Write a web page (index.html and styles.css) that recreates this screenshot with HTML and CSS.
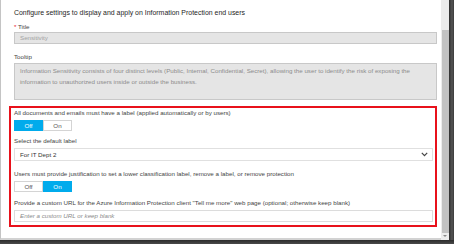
FILE: index.html
```html
<!DOCTYPE html>
<html lang="en">
<head>
    <meta charset="UTF-8">
    <title>Information Protection - Policy</title>
    <link rel="stylesheet" href="styles.css">
</head>
<body>
    <div class="window">
        <!-- Blade content -->
        <div class="blade">
            <div class="blade-title">Configure settings to display and apply on Information Protection end users</div>

            <div class="label label-first"><span class="required">*</span> Title</div>
            <div class="field field-disabled">Sensitivity</div>

            <div class="label label-gap">Tooltip</div>
            <div class="field field-disabled field-area">Information Sensitivity consists of four distinct levels (Public, Internal, Confidential, Secret), allowing the user to identify the risk of exposing the information to unauthorized users inside or outside the business.</div>

            <!-- Highlighted policy settings -->
            <div class="policy">
                <div class="label">All documents and emails must have a label (applied automatically or by users)</div>
                <div class="toggle">
                    <span class="toggle-opt selected">Off</span>
                    <span class="toggle-opt">On</span>
                </div>

                <div class="label label-mid">Select the default label</div>
                <div class="field field-select">
                    <span>For IT Dept 2</span>
                    <svg class="chevron" width="7" height="5" viewBox="0 0 7 5">
                        <path d="M0.8 0.8 L3.5 3.6 L6.2 0.8" fill="none" stroke="#444" stroke-width="1.2"/>
                    </svg>
                </div>

                <div class="label label-wide">Users must provide justification to set a lower classification label, remove a label, or remove protection</div>
                <div class="toggle">
                    <span class="toggle-opt">Off</span>
                    <span class="toggle-opt selected">On</span>
                </div>

                <div class="label label-url">Provide a custom URL for the Azure Information Protection client "Tell me more" web page (optional; otherwise keep blank)</div>
                <div class="field field-input">Enter a custom URL or keep blank</div>
            </div>
        </div>

        <!-- Scrollbar -->
        <div class="scrollbar">
            <div class="thumb"></div>
            <div class="arrow"></div>
        </div>
        <div class="frame-edge"></div>
    </div>
    <div class="frame-bottom"></div>
</body>
</html>
```

FILE: styles.css
```css
body {
    margin: 0;
    padding: 0;
    width: 454px;
    height: 244px;
    overflow: hidden;
    background-color: #3b3b3b;
    font-family: "Liberation Sans", Arial, sans-serif;
}

.window {
    display: flex;
    height: 240px;
}

/* Blade */
.blade {
    width: 441px;
    height: 240px;
    box-sizing: border-box;
    background-color: #ffffff;
    border-left: 1px solid #c4c4c4;
    border-bottom: 2px solid #d2d2d2;
    padding: 8px 4px 0 13px;
}

.blade-title {
    font-size: 6.95px;
    line-height: 10px;
    color: #1e1e1e;
    white-space: nowrap;
}

.label {
    font-size: 6.2px;
    line-height: 10px;
    color: #444444;
    white-space: nowrap;
}

.label-first {
    margin-top: 4px;
}

.label-gap {
    margin-top: 8px;
    margin-bottom: 1px;
}

.label-mid {
    margin-top: 5px;
    margin-bottom: 2px;
}

.label-wide {
    margin-top: 8px;
}

.label-url {
    margin-top: 6px;
    margin-bottom: 2px;
}

.required {
    color: #e81123;
}

.field {
    box-sizing: border-box;
    border: 1px solid #c8c8c8;
    font-size: 6.2px;
    padding: 0 5px;
    white-space: nowrap;
}

.field-disabled {
    background-color: #e5e5e5;
    color: #a2a2a2;
    height: 12px;
    line-height: 10px;
}

.field-area {
    height: 37px;
    padding-top: 2px;
    line-height: 10.5px;
    color: #8c8c8c;
    white-space: normal;
    padding-right: 18px;
}

/* Red highlight */
.policy {
    margin-top: 6px;
    margin-left: -5px;
    border: 2px solid #e8111b;
    padding: 0 2px 3px 3px;
}

.toggle {
    display: flex;
    margin-top: 2px;
}

.toggle-opt {
    box-sizing: border-box;
    width: 29px;
    height: 11px;
    line-height: 10px;
    text-align: center;
    font-size: 6.2px;
    color: #555555;
    background-color: #ffffff;
    border: 1px solid #d4d4d4;
}

.toggle-opt.selected {
    background-color: #00abec;
    border-color: #00abec;
    color: #ffffff;
}

.field-select {
    height: 13px;
    border-color: #e0e0e0;
    color: #333333;
    display: flex;
    align-items: center;
    justify-content: space-between;
    padding-right: 4px;
}

.field-input {
    height: 12px;
    line-height: 10px;
    border-color: #dcdcdc;
    color: #8a8a8a;
    font-style: italic;
}

/* Scrollbar */
.scrollbar {
    width: 8px;
    height: 240px;
    background-color: #ececec;
    display: flex;
    flex-direction: column;
    align-items: center;
}

.thumb {
    width: 7px;
    margin-top: 30px;
    height: 203px;
    background-color: #c2c2c2;
}

.arrow {
    margin-top: 2px;
    width: 0;
    height: 0;
    border-left: 2px solid transparent;
    border-right: 2px solid transparent;
    border-top: 2px solid #8a8a8a;
}

.frame-edge {
    width: 5px;
    height: 240px;
    background: linear-gradient(to right, #2f2f2f, #555555 60%, #3a3a3a);
}

.frame-bottom {
    height: 4px;
    background: linear-gradient(to bottom, #2c2c2c, #4a4a4a);
}
```
